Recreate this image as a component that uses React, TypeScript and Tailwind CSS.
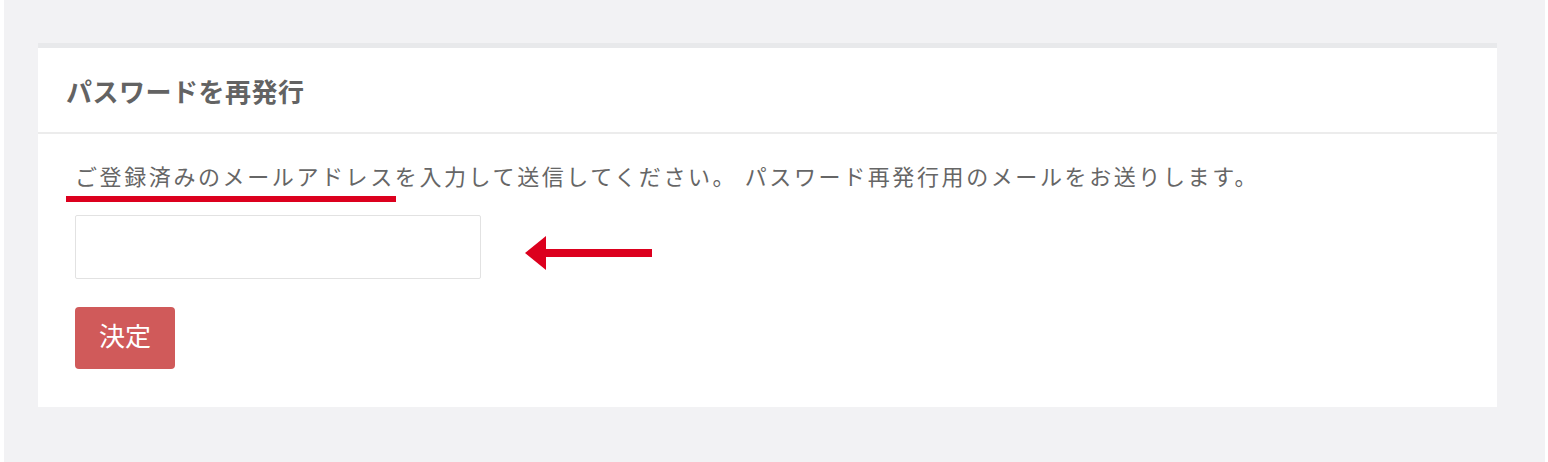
import React from 'react';

const font = '"Noto Sans CJK JP", "Liberation Sans", sans-serif';

const ArrowLeft: React.FC = () => (
  <svg width="127" height="34" viewBox="0 0 127 34" className="block">
    <rect x="20" y="13" width="107" height="8" fill="#dc001e" />
    <polygon points="0,17 21,0 21,34" fill="#dc001e" />
  </svg>
);

const App: React.FC = () => {
  return (
    <div className="min-h-[462px] w-[1548px] bg-white pl-[4px] pr-[3px]" style={{ fontFamily: font }}>
      <div className="h-[462px] bg-[#f2f2f4] pt-[43px] pl-[34px] pr-[48px]">
        <div className="border-t-[5px] border-[#e8e9eb] bg-white">
          <div className="flex h-[86px] items-center border-b-2 border-[#ececec] pl-[28px]">
            <h1 className="text-[26px] font-bold tracking-[0.5px] text-[#636363]">パスワードを再発行</h1>
          </div>
          <div className="px-[37px] pt-[23px] pb-[38px]">
            <div className="relative">
              <p className="text-[22px] leading-[36px] tracking-[2.6px] text-[#666666]">
                ご登録済みのメールアドレスを入力して送信してください。 パスワード再発行用のメールをお送りします。
              </p>
              <span className="absolute left-[-9px] top-[39px] h-[6px] w-[330px] bg-[#dc001e]" />
            </div>
            <div className="mt-[22px] flex items-center gap-[44px]">
              <input
                type="text"
                className="h-[64px] w-[406px] rounded-[2px] border border-[#e2e2e2] bg-white px-3 outline-none"
              />
              <div className="mt-[12px]">
                <ArrowLeft />
              </div>
            </div>
            <button
              type="button"
              className="mt-[28px] flex h-[62px] w-[100px] items-center justify-center rounded-[4px] bg-[#d05a5a] pb-[8px] text-[26px] text-white"
            >
              決定
            </button>
          </div>
        </div>
      </div>
    </div>
  );
};

export default App;
